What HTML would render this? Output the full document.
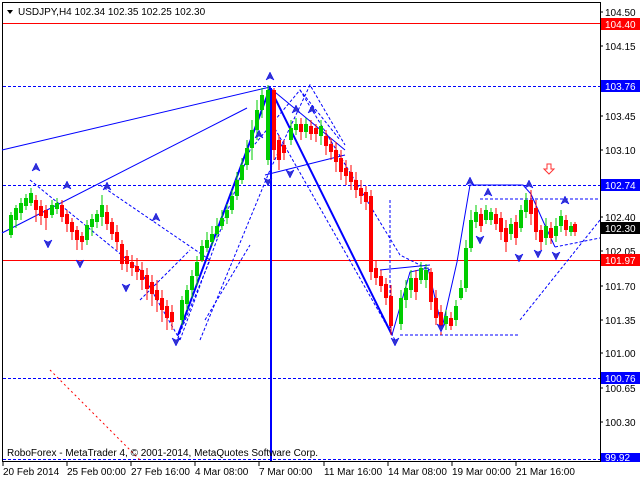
<!DOCTYPE html>
<html><head><style>
body{margin:0;background:#fff;width:640px;height:480px;overflow:hidden;font-family:"Liberation Sans",sans-serif}
svg text{font-family:"Liberation Sans",sans-serif;font-size:10px}
</style></head><body>
<svg width="640" height="480" viewBox="0 0 640 480" xmlns="http://www.w3.org/2000/svg">
<rect width="640" height="480" fill="#fff"/>
<!-- frame -->
<path d="M2.5 2.5H600.5V461.5H2.5Z" fill="none" stroke="#000"/>
<!-- horizontal levels -->
<line x1="3" y1="23.5" x2="600" y2="23.5" stroke="#f00"/>
<line x1="3" y1="260.5" x2="600" y2="260.5" stroke="#f00"/>
<g stroke="#00f" stroke-dasharray="3,2" fill="none">
<line x1="3" y1="86.5" x2="600" y2="86.5"/>
<line x1="3" y1="185.5" x2="600" y2="185.5"/>
<line x1="3" y1="378.5" x2="600" y2="378.5"/>
<line x1="3" y1="459.5" x2="600" y2="459.5"/>
<line x1="480" y1="199" x2="600" y2="199"/>
<line x1="400" y1="335" x2="520" y2="335"/>
<path d="M30 180L140 270L180 340"/><path d="M100 185L210 260L175 345"/>
<path d="M180 340L250 150L300 90L340 140"/><path d="M200 340L270 170L310 85L345 145"/>
<path d="M300 90L400 255L430 270"/><path d="M270 120L395 340"/>
<path d="M390 200L390 330"/><path d="M520 320L600 220"/><path d="M555 247L600 238"/>
<path d="M140 300L190 250"/><path d="M205 320L250 245"/>
</g>
<path d="M50 370L140 460" stroke="#f00" stroke-dasharray="2,3" fill="none"/>
<!-- trend lines -->
<g stroke="#00f" fill="none">
<line x1="2" y1="150" x2="270" y2="87"/>
<line x1="2" y1="233" x2="247" y2="108"/>
<path d="M270 88L345 150"/><path d="M265 175L345 155"/>
<path d="M392 335L410 272L428 268L442 328L457 262L470 185L523 185L531 194L543 221L555 247"/>
<path d="M380 270L430 265"/>
</g>
<g stroke="#00f" stroke-width="2" fill="none">
<path d="M178 335L270 88L392 335"/>
</g>
<line x1="271" y1="88" x2="271" y2="461" stroke="#00f" stroke-width="2"/>
<!-- candles -->
<g stroke="#0c0">
<path d="M11 212V238M16 205V228M21 198V220M26 194V210M31 188V206M52 200V218M57 198V214M87 220V245M92 214V236M97 210V228M102 195V226M182 296V325M187 285V310M192 270V298M197 256V286M202 240V262M207 232V252M212 226V246M217 218V238M222 210V230M227 204V224M232 190V214M237 172V200M242 158V184M247 140V170M252 120V160M257 100V140M262 88V118M268 85V165M291 120V145M296 118V135M306 118V138M321 120V145M401 290V330M406 280V308M411 270V298M421 262V284M426 264V288M446 310V330M456 300V326M461 280V300M466 240V292M471 210V252M476 205V228M486 205V224M491 208V225M511 218V240M521 205V232M526 193V218M546 218V245M556 218V242M561 210V232M571 222V236"/>
</g>
<g fill="#0c0">
<rect x="9" y="215" width="4" height="20"/><rect x="14" y="208" width="4" height="12"/><rect x="19" y="203" width="4" height="10"/><rect x="24" y="198" width="4" height="8"/><rect x="29" y="193" width="4" height="10"/>
<rect x="50" y="205" width="4" height="10"/><rect x="55" y="203" width="4" height="6"/><rect x="85" y="225" width="4" height="15"/><rect x="90" y="219" width="4" height="8"/><rect x="95" y="214" width="4" height="8"/><rect x="100" y="205" width="4" height="12"/>
<rect x="180" y="300" width="4" height="20"/><rect x="185" y="290" width="4" height="14"/><rect x="190" y="276" width="4" height="14"/><rect x="195" y="262" width="4" height="14"/><rect x="200" y="246" width="4" height="14"/><rect x="205" y="240" width="4" height="8"/><rect x="210" y="234" width="4" height="8"/><rect x="215" y="226" width="4" height="8"/><rect x="220" y="218" width="4" height="8"/><rect x="225" y="210" width="4" height="8"/><rect x="230" y="196" width="4" height="14"/><rect x="235" y="180" width="4" height="16"/><rect x="240" y="165" width="4" height="15"/><rect x="245" y="148" width="4" height="17"/><rect x="250" y="130" width="4" height="18"/><rect x="255" y="110" width="4" height="20"/><rect x="260" y="95" width="4" height="15"/><rect x="266" y="90" width="4" height="70"/>
<rect x="289" y="128" width="4" height="12"/><rect x="294" y="124" width="4" height="6"/><rect x="304" y="124" width="4" height="8"/><rect x="319" y="126" width="4" height="10"/>
<rect x="399" y="298" width="4" height="26"/><rect x="404" y="288" width="4" height="12"/><rect x="409" y="278" width="4" height="12"/><rect x="419" y="268" width="4" height="12"/><rect x="424" y="270" width="4" height="10"/><rect x="444" y="316" width="4" height="8"/><rect x="454" y="306" width="4" height="14"/><rect x="459" y="288" width="4" height="10"/><rect x="464" y="248" width="4" height="40"/><rect x="469" y="220" width="4" height="28"/><rect x="474" y="212" width="4" height="10"/><rect x="484" y="210" width="4" height="10"/><rect x="489" y="212" width="4" height="8"/><rect x="509" y="224" width="4" height="10"/><rect x="519" y="210" width="4" height="18"/><rect x="524" y="200" width="4" height="12"/><rect x="544" y="226" width="4" height="12"/><rect x="554" y="226" width="4" height="10"/><rect x="559" y="216" width="4" height="10"/><rect x="569" y="226" width="4" height="6"/>
</g>
<g stroke="#f00">
<path d="M36 195V222M41 200V225M46 205V230M62 200V222M67 210V232M72 218V240M77 226V250M82 232V250M107 205V230M112 218V240M117 225V250M122 240V270M127 250V272M132 255V276M137 258V280M142 262V290M147 268V300M152 275V306M157 280V312M162 290V322M167 300V330M172 305V330M274 88V160M279 135V170M284 140V160M301 118V140M311 120V140M316 124V142M326 130V155M331 138V160M336 142V172M341 150V180M346 160V185M351 165V190M356 172V198M361 180V204M366 186V210M371 190V280M376 260V285M381 270V292M386 278V305M391 285V335M416 270V300M431 268V310M436 290V325M441 305V335M451 312V330M481 208V232M496 208V230M501 212V240M506 220V252M516 215V245M531 190V225M536 200V240M541 225V250M551 222V244M566 215V236M575 222V236"/>
</g>
<g fill="#f00">
<rect x="34" y="200" width="4" height="10"/><rect x="39" y="206" width="4" height="10"/><rect x="44" y="210" width="4" height="8"/><rect x="60" y="205" width="4" height="12"/><rect x="65" y="214" width="4" height="10"/><rect x="70" y="222" width="4" height="10"/><rect x="75" y="230" width="4" height="10"/><rect x="80" y="236" width="4" height="6"/>
<rect x="105" y="212" width="4" height="12"/><rect x="110" y="222" width="4" height="12"/><rect x="115" y="232" width="4" height="10"/><rect x="120" y="244" width="4" height="20"/><rect x="125" y="256" width="4" height="8"/><rect x="130" y="262" width="4" height="6"/><rect x="135" y="266" width="4" height="6"/><rect x="140" y="270" width="4" height="10"/><rect x="145" y="275" width="4" height="14"/><rect x="150" y="282" width="4" height="12"/><rect x="155" y="290" width="4" height="10"/><rect x="160" y="298" width="4" height="12"/><rect x="165" y="306" width="4" height="12"/><rect x="170" y="312" width="4" height="10"/>
<rect x="272" y="90" width="4" height="60"/><rect x="277" y="140" width="4" height="20"/><rect x="282" y="145" width="4" height="8"/><rect x="299" y="124" width="4" height="8"/><rect x="309" y="126" width="4" height="8"/><rect x="314" y="128" width="4" height="6"/><rect x="324" y="136" width="4" height="10"/><rect x="329" y="144" width="4" height="8"/><rect x="334" y="150" width="4" height="12"/><rect x="339" y="158" width="4" height="14"/><rect x="344" y="168" width="4" height="8"/><rect x="349" y="172" width="4" height="10"/><rect x="354" y="180" width="4" height="10"/><rect x="359" y="188" width="4" height="8"/><rect x="364" y="192" width="4" height="10"/><rect x="369" y="196" width="4" height="76"/><rect x="374" y="268" width="4" height="10"/><rect x="379" y="276" width="4" height="10"/><rect x="384" y="284" width="4" height="14"/><rect x="389" y="296" width="4" height="30"/>
<rect x="414" y="278" width="4" height="14"/><rect x="429" y="272" width="4" height="30"/><rect x="434" y="298" width="4" height="20"/><rect x="439" y="312" width="4" height="14"/><rect x="449" y="318" width="4" height="8"/><rect x="479" y="214" width="4" height="12"/><rect x="494" y="214" width="4" height="10"/><rect x="499" y="218" width="4" height="14"/><rect x="504" y="228" width="4" height="14"/><rect x="514" y="222" width="4" height="16"/><rect x="529" y="200" width="4" height="14"/><rect x="534" y="208" width="4" height="24"/><rect x="539" y="230" width="4" height="12"/><rect x="549" y="228" width="4" height="10"/><rect x="564" y="220" width="4" height="10"/><rect x="573" y="224" width="4" height="8"/>
</g>
<!-- fractal arrows -->
<g fill="#33c" stroke="#00f" stroke-width="0.5">
<path d="M36 163l-4 8 4-2 4 2z"/><path d="M67 181l-4 8 4-2 4 2z"/><path d="M107 182l-4 8 4-2 4 2z"/><path d="M156 213l-4 8 4-2 4 2z"/><path d="M270 72l-4 8 4-2 4 2z"/><path d="M259 130l-4 8 4-2 4 2z"/><path d="M296 105l-4 8 4-2 4 2z"/><path d="M312 105l-4 8 4-2 4 2z"/><path d="M470 177l-4 8 4-2 4 2z"/><path d="M529 180l-4 8 4-2 4 2z"/><path d="M565 196l-4 8 4-2 4 2z"/><path d="M488 188l-4 8 4-2 4 2z"/>
<path d="M48 248l-4-8 4 2 4-2z"/><path d="M80 268l-4-8 4 2 4-2z"/><path d="M126 292l-4-8 4 2 4-2z"/><path d="M176 346l-4-8 4 2 4-2z"/><path d="M268 186l-4-8 4 2 4-2z"/><path d="M290 178l-4-8 4 2 4-2z"/><path d="M395 346l-4-8 4 2 4-2z"/><path d="M441 332l-4-8 4 2 4-2z"/><path d="M519 262l-4-8 4 2 4-2z"/><path d="M538 258l-4-8 4 2 4-2z"/><path d="M556 260l-4-8 4 2 4-2z"/><path d="M480 244l-4-8 4 2 4-2z"/>
</g>
<path d="M547 164h4v5h3l-5 5-5-5h3z" fill="#fff" stroke="#f33"/>
<!-- header -->
<path d="M7 10h6l-3 4z" fill="#000"/>
<text x="18" y="15" fill="#000">USDJPY,H4  102.34 102.35 102.25 102.30</text>
<text x="7" y="456" fill="#000">RoboForex - MetaTrader 4, © 2001-2014, MetaQuotes Software Corp.</text>
<!-- right axis -->
<g fill="#000">
<text x="605" y="16">104.50</text><text x="605" y="50">104.15</text><text x="605" y="120">103.45</text><text x="605" y="154">103.10</text><text x="605" y="221">102.40</text><text x="605" y="255">102.05</text><text x="605" y="290">101.70</text><text x="605" y="324">101.35</text><text x="605" y="357">101.00</text><text x="605" y="392">100.65</text><text x="605" y="426">100.30</text>
</g>
<g stroke="#000"><path d="M600 12h3M600 46h3M600 116h3M600 150h3M600 217h3M600 251h3M600 286h3M600 320h3M600 353h3M600 388h3M600 422h3"/></g>
<rect x="601" y="18" width="39" height="12" fill="#f00"/><text x="605" y="28" fill="#fff">104.40</text>
<rect x="601" y="80" width="39" height="12" fill="#00f"/><text x="605" y="90" fill="#fff">103.76</text>
<rect x="601" y="179" width="39" height="12" fill="#00f"/><text x="605" y="189" fill="#fff">102.74</text>
<rect x="601" y="222" width="39" height="12" fill="#000"/><text x="605" y="232" fill="#fff">102.30</text>
<rect x="601" y="254" width="39" height="12" fill="#f00"/><text x="605" y="264" fill="#fff">101.97</text>
<rect x="601" y="372" width="39" height="12" fill="#00f"/><text x="605" y="382" fill="#fff">100.76</text>
<rect x="601" y="453" width="39" height="9" fill="#00f"/><text x="605" y="461" fill="#fff">99.92</text>
<!-- bottom axis -->
<g stroke="#000"><path d="M3 462v4M67 462v4M131 462v4M195 462v4M259 462v4M324 462v4M388 462v4M452 462v4M516 462v4"/></g>
<g fill="#000">
<text x="3" y="475">20 Feb 2014</text><text x="67" y="475">25 Feb 00:00</text><text x="131" y="475">27 Feb 16:00</text><text x="195" y="475">4 Mar 08:00</text><text x="259" y="475">7 Mar 00:00</text><text x="324" y="475">11 Mar 16:00</text><text x="388" y="475">14 Mar 08:00</text><text x="452" y="475">19 Mar 00:00</text><text x="516" y="475">21 Mar 16:00</text>
</g>
</svg>
</body></html>
